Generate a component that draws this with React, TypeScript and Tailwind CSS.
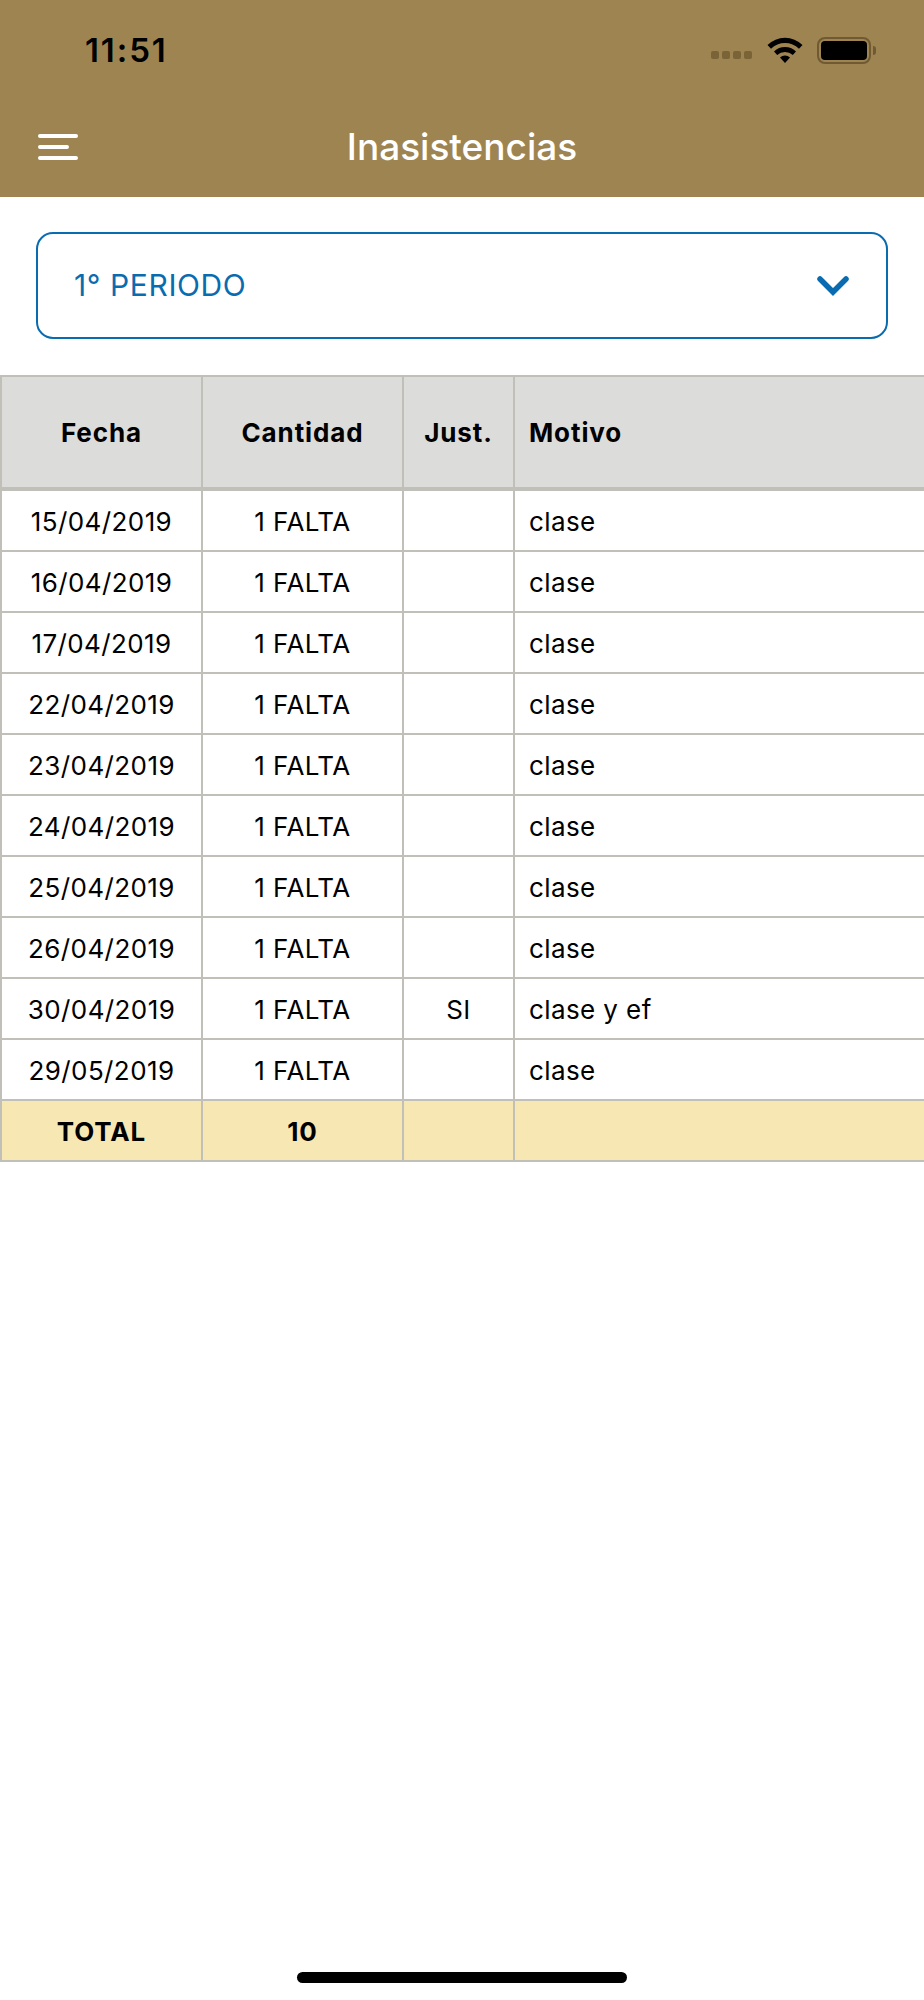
const rows = [
  ["15/04/2019", "1 FALTA", "", "clase"],
  ["16/04/2019", "1 FALTA", "", "clase"],
  ["17/04/2019", "1 FALTA", "", "clase"],
  ["22/04/2019", "1 FALTA", "", "clase"],
  ["23/04/2019", "1 FALTA", "", "clase"],
  ["24/04/2019", "1 FALTA", "", "clase"],
  ["25/04/2019", "1 FALTA", "", "clase"],
  ["26/04/2019", "1 FALTA", "", "clase"],
  ["30/04/2019", "1 FALTA", "SI", "clase y ef"],
  ["29/05/2019", "1 FALTA", "", "clase"],
]

function StatusBar() {
  return (
    <div className="flex h-[100px] items-start justify-between pt-[30px] pl-[85px] pr-[48px]">
      <span className="text-[33px] leading-[40px] font-semibold tracking-[1.9px] text-black">11:51</span>
      <div className="flex items-center pt-[6px]">
        <div className="mt-[9px] mr-[15px] flex gap-[3px]">
          <span className="h-[8px] w-[8px] rounded-[2px] bg-[#7a6337]" />
          <span className="h-[8px] w-[8px] rounded-[2px] bg-[#7a6337]" />
          <span className="h-[8px] w-[8px] rounded-[2px] bg-[#7a6337]" />
          <span className="h-[8px] w-[8px] rounded-[2px] bg-[#7a6337]" />
        </div>
        <svg width="36" height="28" viewBox="0 0 36 28" className="mr-[14px]">
          <path d="M0.5 9 A25 25 0 0 1 35.5 9 L32 12.8 A20 20 0 0 0 4 12.8 Z" fill="#000" />
          <path d="M7 15.5 A16 16 0 0 1 29 15.5 L25.8 19 A11.5 11.5 0 0 0 10.2 19 Z" fill="#000" />
          <path d="M13 21.5 A7.5 7.5 0 0 1 23 21.5 L18 27 Z" fill="#000" />
        </svg>
        <div className="flex items-center">
          <div className="flex h-[27px] w-[54px] items-center justify-center rounded-[8px] border-2 border-[#6f5a33]">
            <div className="h-[19px] w-[46px] rounded-[4px] bg-black" />
          </div>
          <div className="ml-[2px] h-[9px] w-[3px] rounded-r-full bg-[#6f5a33]" />
        </div>
      </div>
    </div>
  )
}

function Row({ cells, bold, bg, h = "h-[61px]", border = "border-b-2", text = "pt-[2px]" }: { cells: string[]; bold?: boolean; bg: string; h?: string; border?: string; text?: string }) {
  const weight = bold ? "font-bold tracking-[0.9px]" : "font-normal tracking-[0.4px]"
  return (
    <div className={`flex border-[#c1c0b8] ${h} ${border} ${bg}`}>
      <div className={`flex w-[203px] shrink-0 items-center justify-center border-x-2 border-[#c1c0b8] ${text} ${weight}`}>{cells[0]}</div>
      <div className={`flex w-[201px] shrink-0 items-center justify-center border-r-2 border-[#c1c0b8] ${text} ${weight}`}>{cells[1]}</div>
      <div className={`flex w-[111px] shrink-0 items-center justify-center border-r-2 border-[#c1c0b8] ${text} ${weight}`}>{cells[2]}</div>
      <div className={`flex flex-1 items-center pl-[14px] ${text} ${weight}`}>{cells[3]}</div>
    </div>
  )
}

export default function App() {
  return (
    <div className="relative h-[2000px] w-[924px] overflow-hidden bg-white font-['Inter',sans-serif] text-[26px] text-black">
      <header className="h-[197px] bg-[#9e8450]">
        <StatusBar />
        <div className="relative flex h-[97px] items-center justify-center pb-[3px]">
          <div className="absolute top-[34px] left-[38px] flex w-[40px] flex-col gap-[7px]">
            <span className="h-[4px] w-[40px] rounded-full bg-white" />
            <span className="h-[4px] w-[31px] rounded-full bg-white" />
            <span className="h-[4px] w-[40px] rounded-full bg-white" />
          </div>
          <h1 className="text-[37px] leading-[42px] font-medium text-white">Inasistencias</h1>
        </div>
      </header>

      <div className="px-[36px] pt-[35px] pb-[36px]">
        <div className="flex h-[107px] items-center justify-between rounded-[17px] border-2 border-[#0a6cb0] pr-[37px] pl-[36px] text-[30px] tracking-[0.6px] text-[#0a6cb0]">
          <span>1° PERIODO</span>
          <svg width="32" height="20" viewBox="0 0 32 20" fill="none">
            <path d="M3 3 L16 16 L29 3" stroke="#0a6cb0" strokeWidth="5.5" strokeLinecap="round" strokeLinejoin="miter" />
          </svg>
        </div>
      </div>

      <div className="border-t-2 border-[#c1c0b8]">
        <Row cells={["Fecha", "Cantidad", "Just.", "Motivo"]} bold bg="bg-[#dcdcda]" h="h-[114px]" border="border-b-[4px]" text="" />
        {rows.map((r) => (
          <Row key={r[0]} cells={r} bg="bg-white" />
        ))}
        <Row cells={["TOTAL", "10", "", ""]} bold bg="bg-[#f7e7b3]" />
      </div>

      <div className="absolute bottom-[17px] left-[297px] h-[11px] w-[330px] rounded-full bg-black" />
    </div>
  )
}
